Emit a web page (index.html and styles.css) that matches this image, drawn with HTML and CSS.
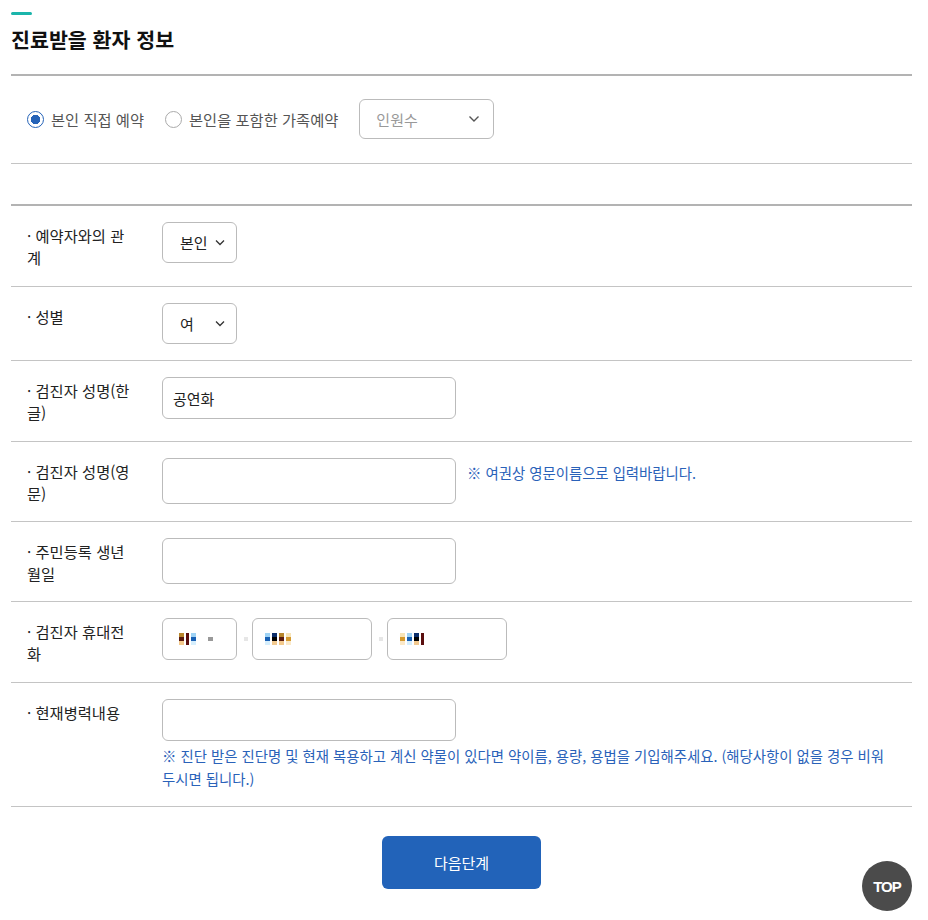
FILE: index.html
```html
<!DOCTYPE html>
<html lang="ko">
<head>
  <meta charset="UTF-8" />
  <meta name="viewport" content="width=device-width, initial-scale=1.0"/>
  <title>진료받을 환자 정보</title>
  <link rel="stylesheet" href="styles.css">
</head>
<body>

  <div class="wrap">
    <!-- Title -->
    <div class="title-box">
      <span class="title-bar"></span>
      <h2>진료받을 환자 정보</h2>
    </div>

    <!-- Reservation type -->
    <div class="type-row">
      <label class="radio checked"><span class="dot"></span>본인 직접 예약</label>
      <label class="radio"><span class="dot"></span>본인을 포함한 가족예약</label>
      <div class="select wide placeholder">
        <span>인원수</span>
        <svg width="12" height="8" viewBox="0 0 12 8"><path d="M1.5 1.5 6 6l4.5-4.5" fill="none" stroke="#555" stroke-width="1.4"/></svg>
      </div>
    </div>

    <div class="spacer"></div>

    <!-- Patient form -->
    <div class="form">
      <div class="row">
        <div class="label">· 예약자와의 관계</div>
        <div class="field">
          <div class="select small">
            <span>본인</span>
            <svg width="10" height="7" viewBox="0 0 10 7"><path d="M1 1.5 5 5.5l4-4" fill="none" stroke="#333" stroke-width="1.3"/></svg>
          </div>
        </div>
      </div>

      <div class="row">
        <div class="label">· 성별</div>
        <div class="field">
          <div class="select small">
            <span>여</span>
            <svg width="10" height="7" viewBox="0 0 10 7"><path d="M1 1.5 5 5.5l4-4" fill="none" stroke="#333" stroke-width="1.3"/></svg>
          </div>
        </div>
      </div>

      <div class="row">
        <div class="label">· 검진자 성명(한글)</div>
        <div class="field">
          <div class="input">공연화</div>
        </div>
      </div>

      <div class="row compact">
        <div class="label">· 검진자 성명(영문)</div>
        <div class="field inline">
          <div class="input tall"></div>
          <p class="note">※ 여권상 영문이름으로 입력바랍니다.</p>
        </div>
      </div>

      <div class="row compact">
        <div class="label">· 주민등록 생년월일</div>
        <div class="field">
          <div class="input tall"></div>
        </div>
      </div>

      <div class="row">
        <div class="label">· 검진자 휴대전화</div>
        <div class="field phone">
          <div class="input tel first">
            <span class="mosaic"><i class="c1"></i><i class="c2"></i><i class="c3"></i><i class="gap"></i><i class="c4"></i></span>
          </div>
          <span class="dash"></span>
          <div class="input tel">
            <span class="mosaic"><i class="c3"></i><i class="c5"></i><i class="c1"></i><i class="c6"></i></span>
          </div>
          <span class="dash"></span>
          <div class="input tel">
            <span class="mosaic"><i class="c6"></i><i class="c3"></i><i class="c5"></i><i class="c2"></i></span>
          </div>
        </div>
      </div>

      <div class="row">
        <div class="label">· 현재병력내용</div>
        <div class="field">
          <div class="input"></div>
          <p class="note block">※ 진단 받은 진단명 및 현재 복용하고 계신 약물이 있다면 약이름, 용량, 용법을 기입해주세요. (해당사항이 없을 경우 비워두시면 됩니다.)</p>
        </div>
      </div>
    </div>

    <div class="btn-area">
      <button class="btn-next">다음단계</button>
    </div>
  </div>

  <a class="top-btn" href="#">TOP</a>

</body>
</html>
```

FILE: styles.css
```css
* {
  box-sizing: border-box;
  margin: 0;
  padding: 0;
}

html, body {
  background: #fff;
  font-family: "Noto Sans CJK KR", "Noto Sans", sans-serif;
  color: #222;
}

.wrap {
  width: 901px;
  margin-left: 11px;
  padding-top: 12px;
  padding-bottom: 30px;
}

/* Title */
.title-box {
  border-bottom: 2px solid #b3b3b3;
  padding-bottom: 20px;
}

.title-bar {
  display: block;
  width: 21px;
  height: 3px;
  border-radius: 2px;
  background: #1bb5ab;
}

.title-box h2 {
  margin-top: 9px;
  font-size: 20.6px;
  font-weight: 700;
  line-height: 30px;
  color: #111;
}

/* Reservation type */
.type-row {
  display: flex;
  align-items: center;
  gap: 21px;
  padding: 23px 16px 24px;
  border-bottom: 1px solid #c4c4c4;
}

.radio {
  display: flex;
  align-items: center;
  gap: 7px;
  font-size: 15.3px;
  color: #555;
}

.radio .dot {
  width: 17px;
  height: 17px;
  border: 1px solid #aaa;
  border-radius: 50%;
  background: #fff;
}

.radio.checked .dot {
  border: 1.5px solid #2563b8;
  background: radial-gradient(circle, #2563b8 0 4.5px, #fff 5px);
}

.select {
  display: flex;
  align-items: center;
  justify-content: space-between;
  height: 42px;
  border: 1px solid #bbb;
  border-radius: 6px;
  background: #fff;
  font-size: 15px;
}

.select.wide {
  width: 135px;
  height: 40px;
  padding: 0 13px 0 16px;
}

.select.placeholder span {
  color: #999;
}

.select.small {
  width: 75px;
  height: 41px;
  padding: 0 11px 0 17px;
  color: #222;
}

.spacer {
  height: 40px;
}

/* Form */
.form {
  border-top: 2px solid #b3b3b3;
}

.row {
  display: flex;
  align-items: flex-start;
  padding: 16px 0;
  border-bottom: 1px solid #c4c4c4;
}

.row.compact {
  padding-bottom: 15px;
}

.label {
  width: 105px;
  margin: 2px 30px 2px 16px;
  font-size: 15.3px;
  line-height: 22px;
  color: #222;
}

.field {
  flex: 1;
}

.field.inline {
  display: flex;
  align-items: flex-start;
  gap: 11px;
}

.input {
  display: flex;
  align-items: center;
  width: 294px;
  height: 42px;
  padding: 0 10px;
  border: 1px solid #bbb;
  border-radius: 6px;
  font-size: 15px;
  color: #222;
}

.input.tall {
  height: 46px;
}

.note {
  font-size: 14.4px;
  color: #2a62b9;
  line-height: 23px;
}

.field.inline .note {
  margin-top: 3px;
}

.note.block {
  margin-top: 3px;
  padding-right: 22px;
}

/* Phone */
.field.phone {
  display: flex;
  align-items: center;
}

.input.tel {
  width: 120px;
  padding: 0 12px;
}

.input.tel.first {
  width: 75px;
  padding: 0 16px;
}

.dash {
  width: 4px;
  height: 4px;
  margin: 0 4px 0 7px;
  background: #e6e6e6;
}

.mosaic {
  display: flex;
  gap: 2px;
  height: 12px;
}

.mosaic i {
  width: 5px;
  height: 12px;
}

.mosaic .gap { width: 8px; }
.mosaic .c1 { background: linear-gradient(#b8862c 0 4px, #5a1a10 4px 8px, #f3c98c 8px); }
.mosaic .c2 { background: #5a0e0e; width: 3px; }
.mosaic .c3 { background: linear-gradient(#9fd3f5 0 4px, #1860b4 4px 8px, #d6eefc 8px); }
.mosaic .c4 { background: linear-gradient(#fff 0 4px, #999 4px 8px, #fff 8px); }
.mosaic .c5 { background: linear-gradient(#0b2d6a 0 4px, #000 4px 8px, #f2c98f 8px); }
.mosaic .c6 { background: linear-gradient(#f7e4b8 0 4px, #d59a2e 4px 8px, #fbe9c9 8px); }

/* Button */
.btn-area {
  display: flex;
  justify-content: center;
  margin-top: 29px;
}

.btn-next {
  width: 159px;
  height: 53px;
  border: none;
  border-radius: 6px;
  background: #2263b9;
  color: #fff;
  font-family: "Noto Sans CJK KR", sans-serif;
  font-size: 15px;
  cursor: pointer;
}

.top-btn {
  position: fixed;
  right: 16px;
  bottom: 9px;
  width: 50px;
  height: 50px;
  border-radius: 50%;
  background: #4b4b4b;
  color: #fff;
  font-family: "Liberation Sans", sans-serif;
  font-size: 15px;
  font-weight: 700;
  letter-spacing: -1px;
  text-decoration: none;
  display: flex;
  align-items: center;
  justify-content: center;
}
```
